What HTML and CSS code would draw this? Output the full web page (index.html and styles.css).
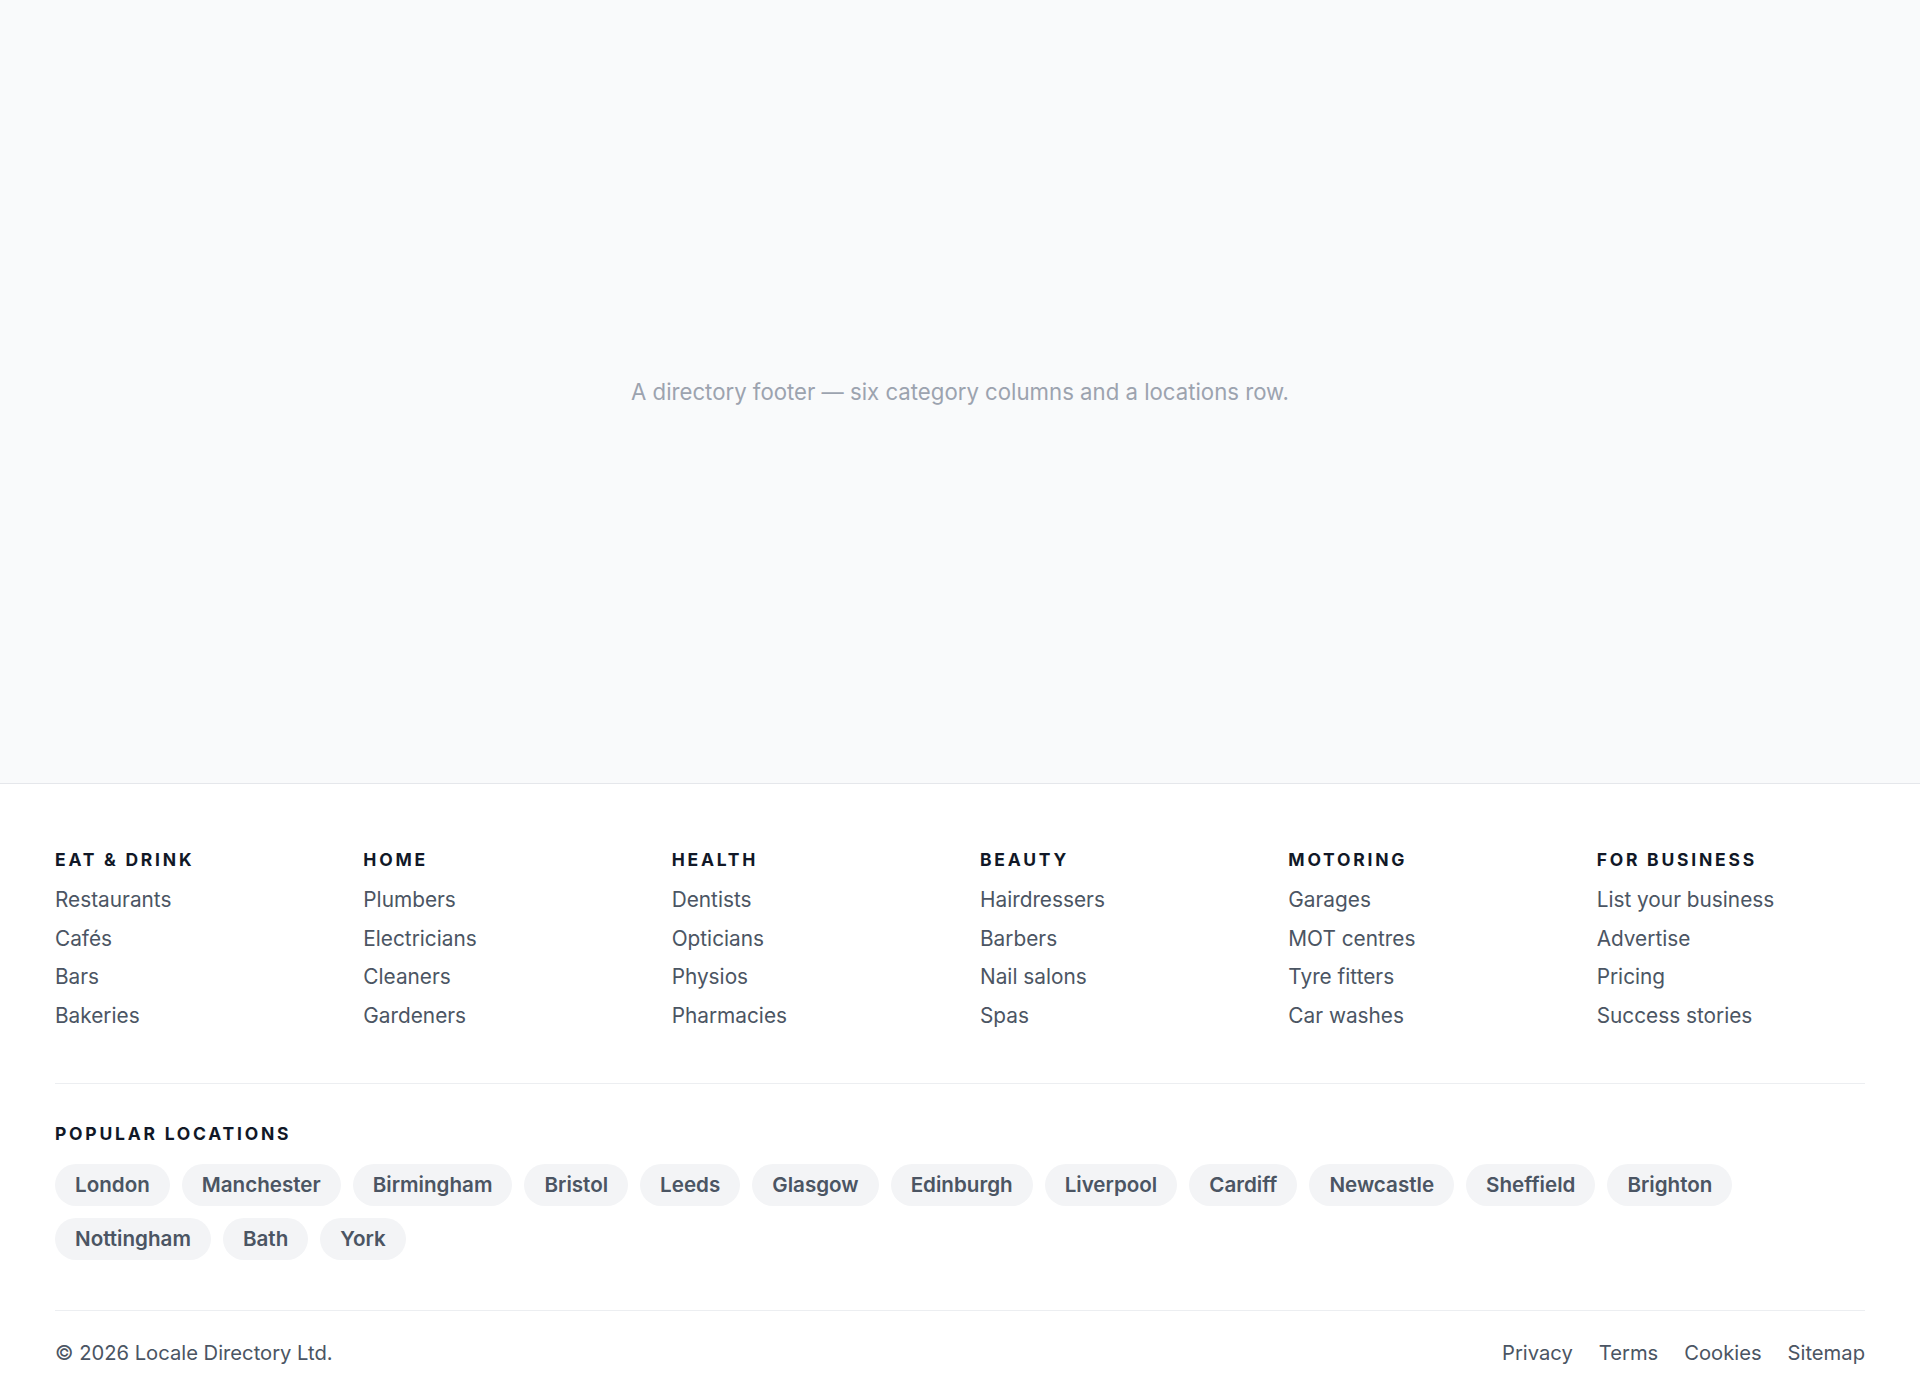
FILE: index.html
```html
<!DOCTYPE html>
<html lang="en">
<head>
<meta charset="utf-8">
<title>Locale Directory</title>
<link rel="stylesheet" href="styles.css">
</head>
<body>
<main class="stage">
  <p class="stage-note">A directory footer — six category columns and a locations row.</p>
</main>
<footer class="footer">
  <div class="cols">
    <div class="col">
      <h4 class="col-title">Eat &amp; Drink</h4>
      <ul class="links">
        <li><a href="#">Restaurants</a></li>
        <li><a href="#">Cafés</a></li>
        <li><a href="#">Bars</a></li>
        <li><a href="#">Bakeries</a></li>
      </ul>
    </div>
    <div class="col">
      <h4 class="col-title">Home</h4>
      <ul class="links">
        <li><a href="#">Plumbers</a></li>
        <li><a href="#">Electricians</a></li>
        <li><a href="#">Cleaners</a></li>
        <li><a href="#">Gardeners</a></li>
      </ul>
    </div>
    <div class="col">
      <h4 class="col-title">Health</h4>
      <ul class="links">
        <li><a href="#">Dentists</a></li>
        <li><a href="#">Opticians</a></li>
        <li><a href="#">Physios</a></li>
        <li><a href="#">Pharmacies</a></li>
      </ul>
    </div>
    <div class="col">
      <h4 class="col-title">Beauty</h4>
      <ul class="links">
        <li><a href="#">Hairdressers</a></li>
        <li><a href="#">Barbers</a></li>
        <li><a href="#">Nail salons</a></li>
        <li><a href="#">Spas</a></li>
      </ul>
    </div>
    <div class="col">
      <h4 class="col-title">Motoring</h4>
      <ul class="links">
        <li><a href="#">Garages</a></li>
        <li><a href="#">MOT centres</a></li>
        <li><a href="#">Tyre fitters</a></li>
        <li><a href="#">Car washes</a></li>
      </ul>
    </div>
    <div class="col">
      <h4 class="col-title">For Business</h4>
      <ul class="links">
        <li><a href="#">List your business</a></li>
        <li><a href="#">Advertise</a></li>
        <li><a href="#">Pricing</a></li>
        <li><a href="#">Success stories</a></li>
      </ul>
    </div>
  </div>
  <section class="locations">
    <h4 class="col-title">Popular locations</h4>
    <div class="chips">
      <a class="chip" href="#">London</a>
      <a class="chip" href="#">Manchester</a>
      <a class="chip" href="#">Birmingham</a>
      <a class="chip" href="#">Bristol</a>
      <a class="chip" href="#">Leeds</a>
      <a class="chip" href="#">Glasgow</a>
      <a class="chip" href="#">Edinburgh</a>
      <a class="chip" href="#">Liverpool</a>
      <a class="chip" href="#">Cardiff</a>
      <a class="chip" href="#">Newcastle</a>
      <a class="chip" href="#">Sheffield</a>
      <a class="chip" href="#">Brighton</a>
      <a class="chip" href="#">Nottingham</a>
      <a class="chip" href="#">Bath</a>
      <a class="chip" href="#">York</a>
    </div>
  </section>
  <div class="bottom">
    <span class="copy">© 2026 Locale Directory Ltd.</span>
    <nav class="legal">
      <a href="#">Privacy</a>
      <a href="#">Terms</a>
      <a href="#">Cookies</a>
      <a href="#">Sitemap</a>
    </nav>
  </div>
</footer>
</body>
</html>
```

FILE: styles.css
```css
* { box-sizing: border-box; }
html, body { margin: 0; padding: 0; }
body {
  font-family: Inter, "Noto Sans", "Liberation Sans", sans-serif;
  background: #ffffff;
  color: #4b5563;
}
a { color: inherit; text-decoration: none; }

.stage {
  height: 784px;
  background: #f9fafb;
  border-bottom: 1px solid #e5e7eb;
  display: flex;
  align-items: center;
  justify-content: center;
}
.stage-note {
  margin: 0;
  font-size: 22.2px;
  line-height: 30px;
  color: #9ca3af;
}

.footer {
  background: #ffffff;
  padding: 64px 55px 40px;
}
.cols {
  display: grid;
  grid-template-columns: repeat(6, 1fr);
  column-gap: 40px;
  padding-bottom: 52px;
  border-bottom: 1px solid #eceef1;
}
.col-title {
  margin: 0 0 13px;
  font-size: 17.5px;
  line-height: 24px;
  font-weight: 700;
  letter-spacing: 0.158em;
  text-transform: uppercase;
  color: #111827;
}
.links {
  list-style: none;
  margin: 0;
  padding: 0;
  display: flex;
  flex-direction: column;
  gap: 8.5px;
}
.links li {
  font-size: 20.8px;
  line-height: 30px;
  color: #4b5563;
}

.locations {
  padding: 38px 0 50px;
  border-bottom: 1px solid #eceef1;
}
.locations .col-title { margin-bottom: 18px; }
.chips {
  display: flex;
  flex-wrap: wrap;
  gap: 12px;
}
.chip {
  display: inline-block;
  padding: 9px 20px;
  font-size: 20.6px;
  line-height: 24px;
  font-weight: 600;
  color: #4b5563;
  background: #f3f4f6;
  border-radius: 999px;
}

.bottom {
  display: flex;
  justify-content: space-between;
  align-items: center;
  padding-top: 28px;
  font-size: 20.2px;
  line-height: 28px;
  color: #4b5563;
}
.legal {
  display: flex;
  gap: 26px;
}
```
